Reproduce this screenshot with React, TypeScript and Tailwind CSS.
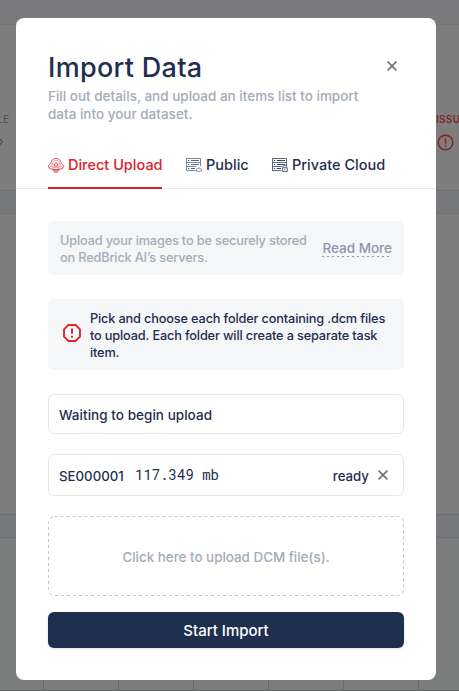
import React from "react";

function CloseIcon({ size }: { size: number }) {
  return (
    <svg width={size} height={size} viewBox="0 0 10 10" fill="none" stroke="#6f6f6f" strokeWidth="1.5">
      <path d="M.6.6 9.4 9.4M9.4.6.6 9.4" />
    </svg>
  );
}

function CloudUploadIcon() {
  return (
    <svg width="16" height="16" viewBox="0 0 16 16" fill="none" stroke="#dc2228" strokeWidth="0.8">
      <path d="M4.500 12.200H3.500A3 3 0 0 1 .6 9.400C.6 8 1.600 6.800 3 6.400 3 3.500 5 1.500 8 1.500s5 2 5 4.900c1.400.4 2.400 1.600 2.400 3a3 3 0 0 1-2.900 2.800H11.500" />
      <path d="M4 10.300A1.300 1.300 0 0 1 3.500 7.800l1.200-.4C4.300 4.700 5.800 3.300 8 3.300s3.700 1.400 3.300 4.100l1.200.4A1.300 1.300 0 0 1 12 10.300" strokeWidth=".4" />
      <path d="M7 11V8H5.700L8 5.400 10.300 8H9v3" strokeWidth=".8" />
      <path d="M5 9v3.500h6V9M4.800 13.700h6.400M6 15.200h4" strokeWidth=".8" />
    </svg>
  );
}

function ServerIcon({ locked }: { locked?: boolean }) {
  return (
    <svg width="16" height="16" viewBox="0 0 16 16" fill="none" stroke={locked ? "#354460" : "#5a6880"} strokeWidth="0.8">
      <path d="M9.500 13.500H.5v-12h14v7.500M.5 5.500h14M.5 9.500h10" />
      <path d="M2 3.500h1.200M2 7.500h1.200M2 11.500h1.200M4.800 3.500h8.200M4.800 7.500h8.200M4.800 11.500h4.200" strokeWidth="1" />
      {locked ? (
        <path d="M10.500 10.800h4.800v3.700h-4.800zM11.500 10.800V9.500a1.400 1.400 0 0 1 2.800 0v1.300M12.900 12v1.300" />
      ) : (
        <path d="M11.500 14.300a1.200 1.200 0 0 1 .1-2.400 1.500 1.500 0 0 1 2.800 0 1.200 1.200 0 0 1 .1 2.400z" />
      )}
    </svg>
  );
}

function AlertOctagon() {
  return (
    <svg className="-mt-1 shrink-0" width="20" height="20" viewBox="0 0 20 20" fill="none" stroke="#dd2329" strokeWidth="1.900">
      <path d="M6.400 2h7.200L18 6.400v7.200L13.600 18H6.400L2 13.600V6.400z" />
      <path d="M10 5.500v5.300M10 12.800v2" />
    </svg>
  );
}

function Backdrop() {
  return (
    <div className="flex h-full flex-col bg-[#77787b]">
      <div className="h-[24px] shrink-0 bg-[#7a7a7c]" />
      <div className="flex h-[167px] shrink-0 justify-between border-y border-t-[#757677] border-b-[#6d6e70] bg-[#7c7d7c]">
        <div className="w-4 overflow-hidden pt-[87px]">
          <div className="-ml-[3px] text-[10px] leading-[14px] font-medium tracking-[.3px] text-[#4f565f]">LE</div>
          <svg className="mt-[11px] -ml-[5px]" width="8" height="10" viewBox="0 0 8 10" fill="none" stroke="#454d59" strokeWidth="1.200">
            <path d="m4 1 3.200 4L4 9 .8 5z" />
          </svg>
        </div>
        <div className="w-[23px] overflow-hidden pt-[87px]">
          <div className="text-[10px] leading-[14px] font-semibold tracking-[.3px] text-[#7e2730]">ISSUES</div>
          <svg className="mt-2 ml-px" width="17" height="17" viewBox="0 0 17 17" fill="none" stroke="#8b1f26" strokeWidth="1.500">
            <circle cx="8.500" cy="8.500" r="7.300" />
            <path d="M8.500 4.500v5M8.500 11v1.500" />
          </svg>
        </div>
      </div>
      <div className="h-[22px] shrink-0" />
      <div className="h-[302px] shrink-0 border-y border-t-[#707173] border-b-[#6c6d6f] bg-[#7c7d7c]" />
      <div className="h-[22px] shrink-0" />
      <div className="flex h-[154px] shrink-0 border-y border-t-[#707173] border-b-[#606161] bg-[#7b7d7c]">
        <div className="w-11 border-r border-[#696b6a]" />
        <div className="w-[75px] border-r border-[#696b6a]" />
        <div className="w-[75px] border-r border-[#696b6a]" />
        <div className="w-[75px] border-r border-[#696b6a]" />
        <div className="w-[75px] border-r border-[#696b6a]" />
        <div className="w-[75px] border-r border-[#696b6a]" />
      </div>
    </div>
  );
}

export default function App() {
  return (
    <div className="relative h-[691px] w-[459px] overflow-hidden font-['Inter',sans-serif] whitespace-nowrap">
      <Backdrop />
      <div className="absolute top-[18px] left-4 flex h-[662px] w-[420px] flex-col rounded-lg bg-white text-[#1f2f4f]">
        <div className="flex h-[171px] shrink-0 flex-col border-b border-[#e7e8ea] px-8 pt-8">
          <div className="flex h-9 items-center justify-between">
            <h1 className="text-[27px] leading-9 font-medium tracking-[.3px]">Import Data</h1>
            <div className="mr-[7px] -mt-1">
              <CloseIcon size={10} />
            </div>
          </div>
          <p className="mt-px text-[13.5px] leading-[18px] font-medium text-[#a2abb8]">
            Fill out details, and upload an items list to import
            <br />
            data into your dataset.
          </p>
          <div className="mt-[25px] -mb-px flex flex-1 gap-6 text-[14.5px] font-medium">
            <div className="flex w-[114px] gap-1 border-b-2 border-[#dc2228] pt-[7px] leading-5 text-[#dc2228]">
              <div className="pt-[2px]"><CloudUploadIcon /></div>
              <span>Direct Upload</span>
            </div>
            <div className="flex w-[62px] gap-1 pt-[7px] leading-5">
              <div className="pt-[2px]"><ServerIcon /></div>
              <span>Public</span>
            </div>
            <div className="flex gap-1 pt-[7px] leading-5">
              <div className="pt-[2px]"><ServerIcon locked /></div>
              <span>Private Cloud</span>
            </div>
          </div>
        </div>
        <div className="flex flex-col px-8 pt-8">
          <div className="flex h-[54px] items-center justify-between rounded-md bg-[#f5f6f8] px-3">
            <p className="pt-px text-[12.75px] leading-[17px] font-medium tracking-[-.17px] text-[#a3acb8]">
              Upload your images to be securely stored
              <br />
              on RedBrick AI’s servers.
            </p>
            <span className="bg-[repeating-linear-gradient(90deg,#8e98a8_0_2px,transparent_2px_5px)] bg-[length:100%_1px] bg-bottom bg-no-repeat pb-px text-[13.5px] leading-4 font-medium text-[#8e98a8]">
              Read More
            </span>
          </div>
          <div className="mt-6 flex h-[71px] items-center gap-2 rounded-md bg-[#f5f6f8] px-[14px]">
            <AlertOctagon />
            <p className="pt-[2px] text-[12.75px] leading-[17px] font-medium tracking-[-.16px]">
              Pick and choose each folder containing .dcm files
              <br />
              to upload. Each folder will create a separate task
              <br />
              item.
            </p>
          </div>
          <div className="mt-6 flex h-10 items-center rounded-md border border-[#e7e8ea] px-[10px] pt-[3px] text-[13.5px] font-medium tracking-[.04px]">
            Waiting to begin upload
          </div>
          <div className="mt-5 flex h-[42px] items-center rounded-md border border-[#e7e8ea] px-[10px] text-[13.25px] font-medium">
            <span className="w-[76px] pt-[3px]">SE000001</span>
            <span className="pb-px font-['Roboto_Mono','DejaVu_Sans_Mono',monospace] text-[14px] font-normal">117.349 mb</span>
            <span className="ml-auto pt-[3px]">ready</span>
            <div className="mr-[5px] ml-[9px]"><CloseIcon size={10} /></div>
          </div>
          <div className="relative mt-5 flex h-20 items-center justify-center text-[13.4px] font-medium text-[#a2abb8]">
            <svg className="absolute inset-0" width="356" height="80" fill="none" stroke="#bcc3d5" strokeDasharray="3 3">
              <rect x=".5" y=".5" width="355" height="79" rx="6" />
            </svg>
            <span className="pt-[2px]">Click here to upload DCM file(s).</span>
          </div>
          <button className="mt-4 h-9 rounded-md bg-[#1f2f4f] pt-[3px] text-[15px] font-medium text-white shadow-sm">
            Start Import
          </button>
        </div>
      </div>
    </div>
  );
}
